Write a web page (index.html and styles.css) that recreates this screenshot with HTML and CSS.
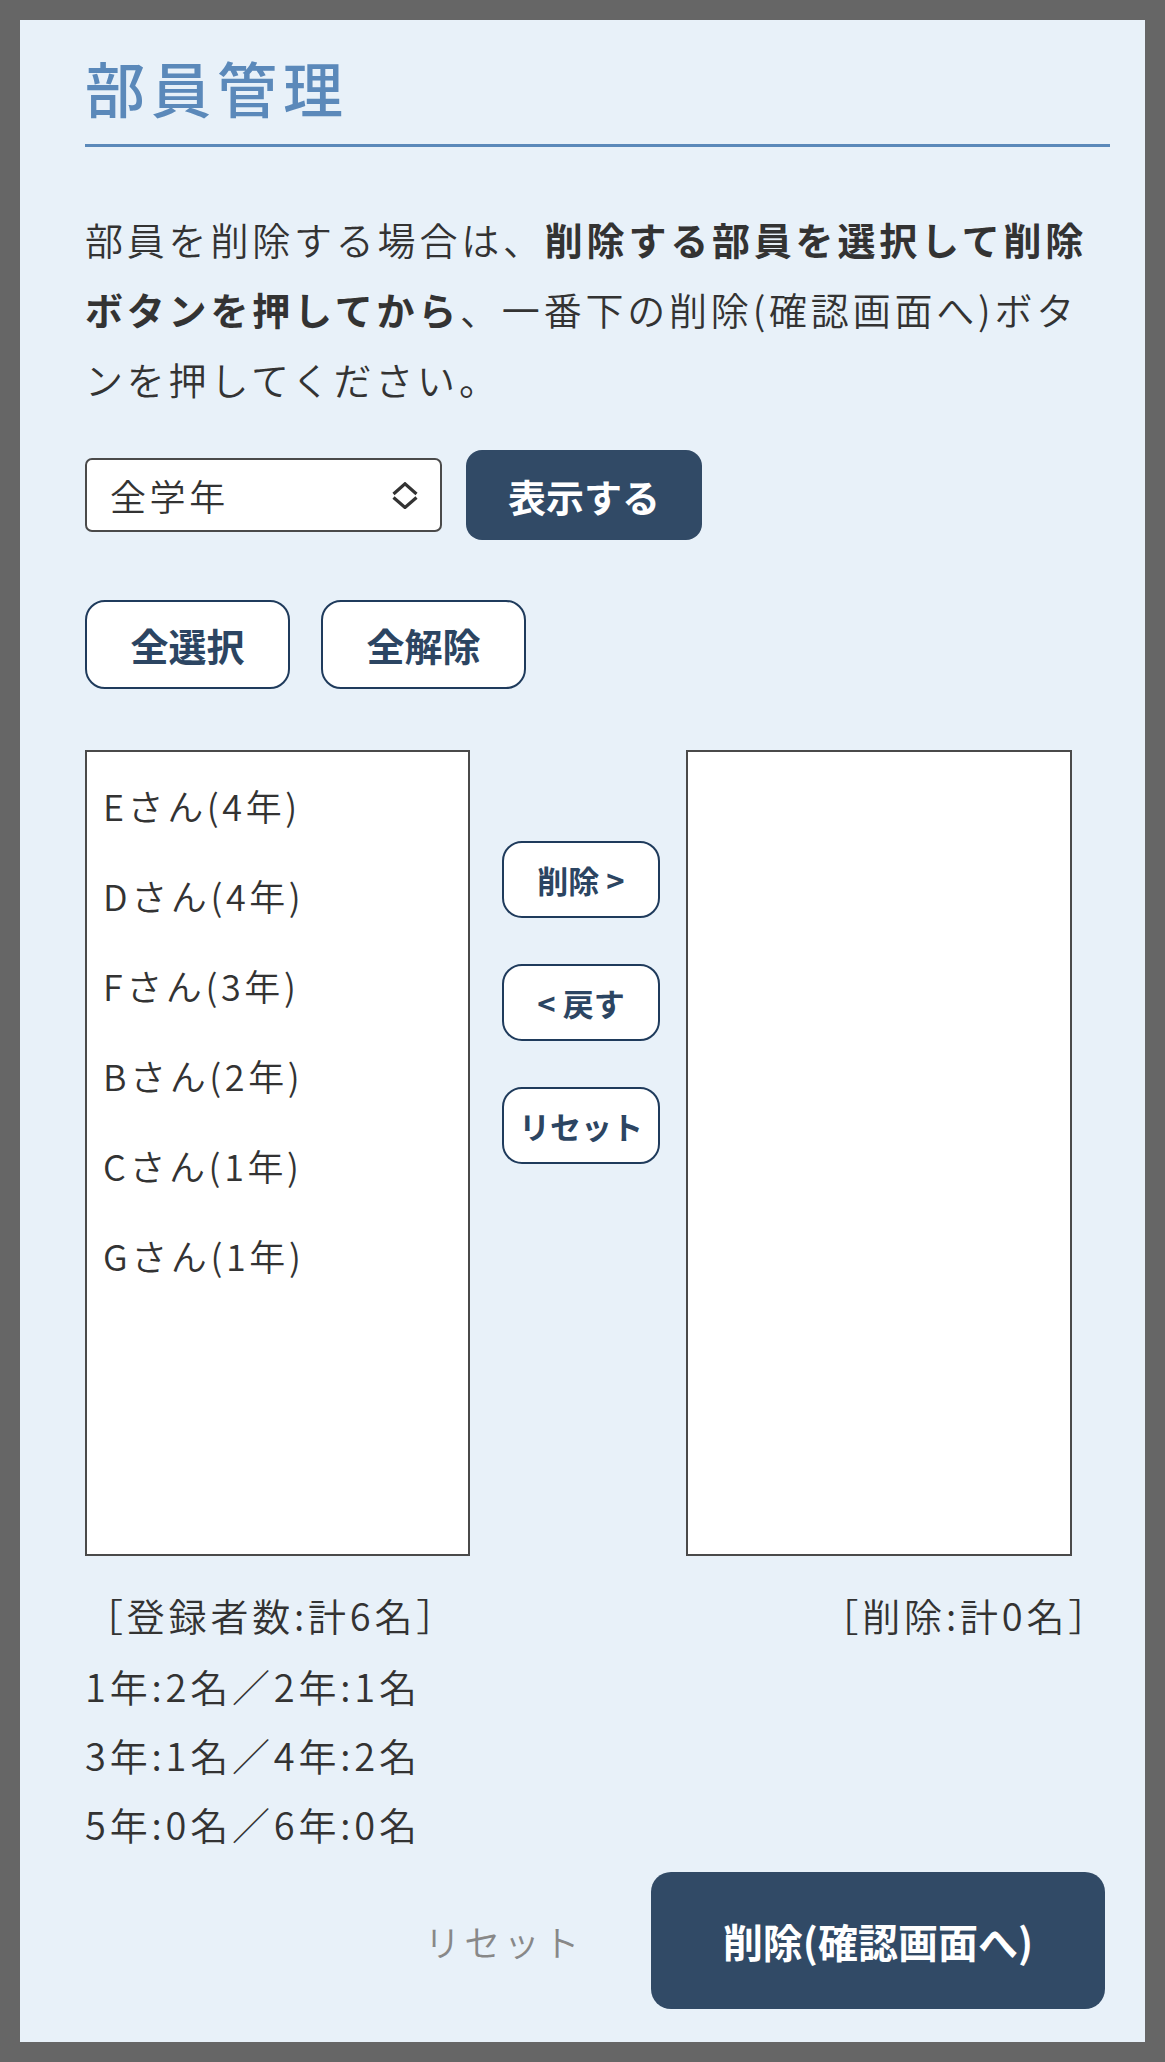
FILE: index.html
```html
<!DOCTYPE html>
<html lang="ja">
<head>
  <meta charset="UTF-8">
  <meta name="viewport" content="width=device-width, initial-scale=1.0">
  <title>部員管理</title>
  <link rel="stylesheet" href="styles.css">
</head>
<body>

  <main class="panel">
    <h1 class="title">部員管理</h1>

    <p class="lead"><span>部員を削除する場合は、</span><strong>削除する部員を選択して削除</strong><strong>ボタンを押してから</strong><span>、一番下の削除(確認画面へ)ボタ</span><span>ンを押してください。</span></p>

    <div class="filter">
      <div class="select-wrap">
        <select class="grade-select" name="grade">
          <option>全学年</option>
          <option>1年</option>
          <option>2年</option>
          <option>3年</option>
          <option>4年</option>
          <option>5年</option>
          <option>6年</option>
        </select>
        <svg class="select-icon" width="26" height="27" viewBox="0 0 26 27">
          <path d="M1.5 12 L13 1.8 L24.5 12" fill="none" stroke="#333" stroke-width="3.2"/>
          <path d="M1.5 15.5 L13 25.5 L24.5 15.5" fill="none" stroke="#333" stroke-width="3.2"/>
        </svg>
      </div>
      <button type="button" class="btn-solid">表示する</button>
    </div>

    <div class="bulk">
      <button type="button" class="btn-outline">全選択</button>
      <button type="button" class="btn-outline">全解除</button>
    </div>

    <div class="lists">
      <ul class="member-box" id="members">
        <li>Eさん(4年)</li>
        <li>Dさん(4年)</li>
        <li>Fさん(3年)</li>
        <li>Bさん(2年)</li>
        <li>Cさん(1年)</li>
        <li>Gさん(1年)</li>
      </ul>

      <div class="move-buttons">
        <button type="button" class="btn-small">削除 &gt;</button>
        <button type="button" class="btn-small">&lt; 戻す</button>
        <button type="button" class="btn-small">リセット</button>
      </div>

      <ul class="member-box" id="removed"></ul>
    </div>

    <div class="counts">
      <div class="counts-left">
        <p class="counts-total">［登録者数:計6名］</p>
        <p>1年:2名／2年:1名</p>
        <p>3年:1名／4年:2名</p>
        <p>5年:0名／6年:0名</p>
      </div>
      <p class="counts-right">［削除:計0名］</p>
    </div>

    <div class="actions">
      <a href="#" class="reset-link">リセット</a>
      <button type="submit" class="btn-submit">削除(確認画面へ)</button>
    </div>
  </main>

</body>
</html>
```

FILE: styles.css
```css
html, body {
  margin: 0;
  background: #666;
}
body {
  padding: 20px;
  font-family: "Noto Sans CJK JP", "Noto Sans", sans-serif;
  font-weight: 350;
  color: #333;
}
.panel {
  box-sizing: border-box;
  min-height: 2022px;
  background: #e8f1f9;
  padding: 26px 35px 33px 65px;
}
.title {
  margin: 0;
  font-size: 60px;
  font-weight: 500;
  line-height: 81px;
  letter-spacing: 0.1em;
  color: #5b89ba;
  padding-bottom: 17px;
  border-bottom: 3px solid #5b89ba;
}
.lead {
  margin: 57px 0 0;
  font-size: 38px;
  line-height: 70px;
  letter-spacing: 0.1em;
}
.lead strong {
  font-weight: 700;
}
.filter {
  display: flex;
  align-items: center;
  gap: 24px;
  margin-top: 36px;
}
.select-wrap {
  position: relative;
}
.grade-select {
  appearance: none;
  -webkit-appearance: none;
  box-sizing: border-box;
  width: 357px;
  height: 74px;
  padding: 0 0 0 23px;
  border: 2px solid #4a4a4a;
  border-radius: 7px;
  background: #fff;
  font-family: inherit;
  font-size: 36px;
  font-weight: 350;
  letter-spacing: 0.1em;
  color: #333;
}
.select-icon {
  position: absolute;
  right: 24px;
  top: 24px;
  pointer-events: none;
}
button {
  font-family: inherit;
  cursor: pointer;
}
.btn-solid {
  width: 236px;
  height: 90px;
  border: none;
  border-radius: 16px;
  background: #314a66;
  color: #fff;
  font-size: 38px;
  font-weight: 700;
}
.bulk {
  display: flex;
  gap: 31px;
  margin-top: 60px;
}
.btn-outline {
  width: 205px;
  height: 89px;
  border: 2px solid #1f3b5c;
  border-radius: 20px;
  background: #fff;
  color: #2c4562;
  font-size: 38px;
  font-weight: 700;
}
.lists {
  display: grid;
  grid-template-columns: 385px 216px 386px;
  margin-top: 61px;
  height: 806px;
}
.member-box {
  margin: 0;
  padding: 8px 0 0 16px;
  list-style: none;
  background: #fff;
  border: 2px solid #4a4a4a;
  font-size: 36px;
  letter-spacing: 0.1em;
}
.member-box li {
  line-height: 90px;
  height: 90px;
  margin-top: -22px;
  margin-bottom: 22px;
}
.member-box li:first-child {
  margin-top: 0;
}
.move-buttons {
  display: flex;
  flex-direction: column;
  align-items: center;
  gap: 46px;
  padding: 91px 0 0 6px;
}
.btn-small {
  width: 158px;
  height: 77px;
  border: 2px solid #1f3b5c;
  border-radius: 20px;
  background: #fff;
  color: #2c4562;
  font-size: 31px;
  font-weight: 700;
}
.counts {
  display: flex;
  justify-content: space-between;
  margin-top: 24px;
  font-size: 38px;
  letter-spacing: 0.1em;
}
.counts p {
  margin: 0;
  line-height: 69px;
}
.counts .counts-total {
  margin-bottom: 2px;
}
.actions {
  display: flex;
  justify-content: flex-end;
  align-items: center;
  gap: 68px;
  margin-top: 14px;
  padding-right: 5px;
}
.reset-link {
  font-size: 36px;
  letter-spacing: 0.1em;
  color: #888;
  text-decoration: none;
}
.btn-submit {
  width: 454px;
  height: 137px;
  border: none;
  border-radius: 20px;
  background: #314a66;
  color: #fff;
  font-size: 40px;
  font-weight: 700;
}
```
